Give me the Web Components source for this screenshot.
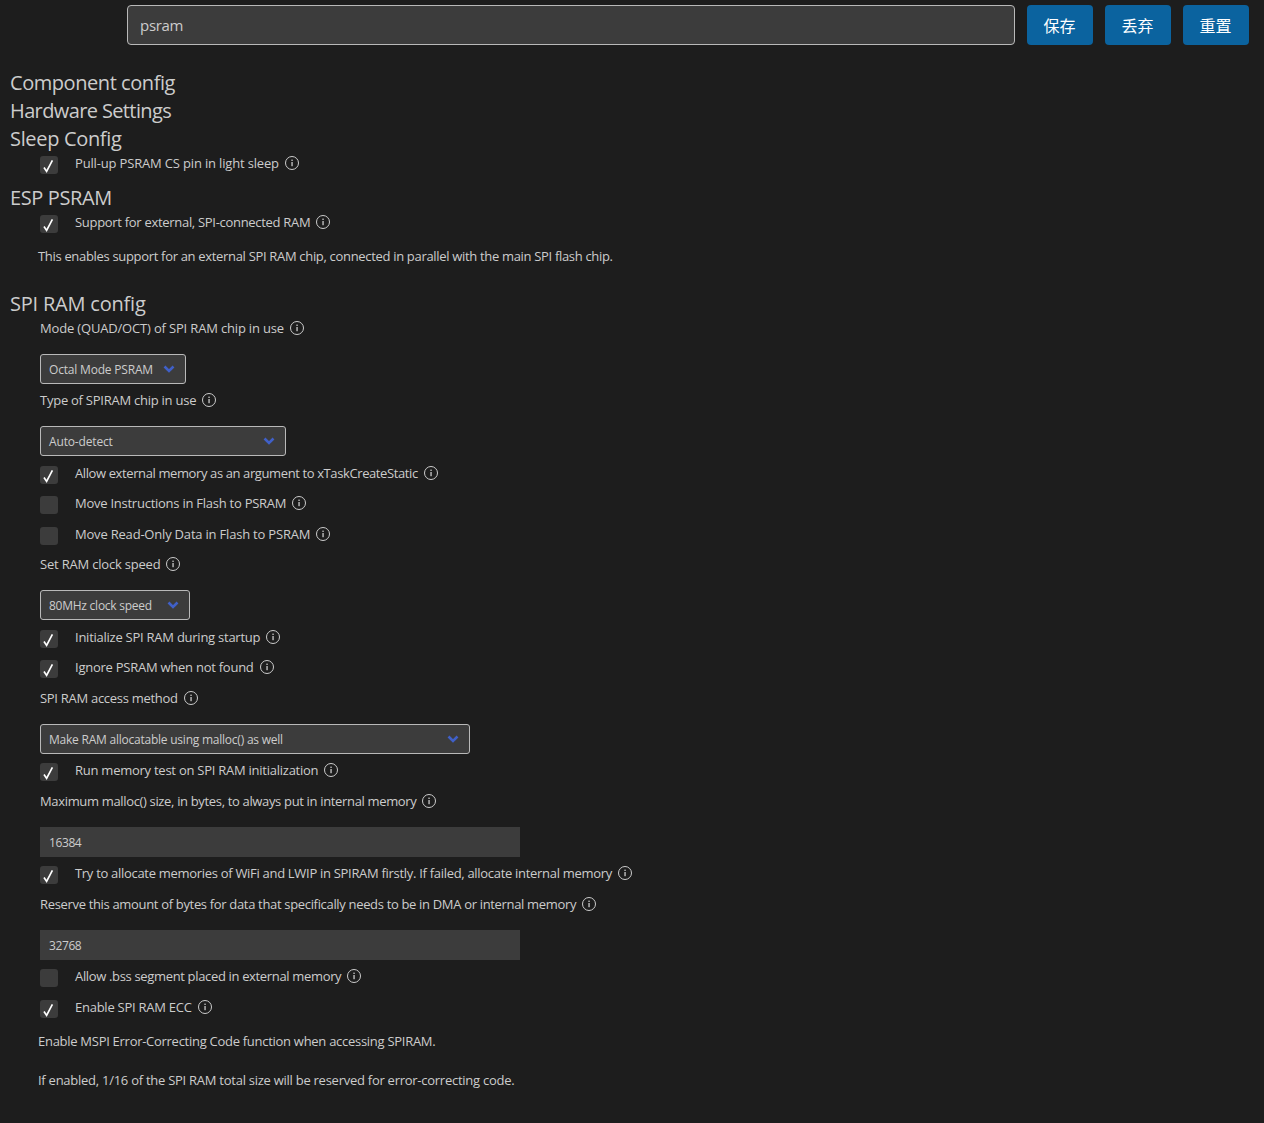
<!DOCTYPE html>
<html lang="en">
<head>
<meta charset="utf-8">
<title>SDK Configuration</title>
<style>
  html, body { margin: 0; padding: 0; background: #1d1d1d; }
  body { color: #cccccc; font-family: "Open Sans", "Noto Sans CJK SC", sans-serif; font-size: 13px; height: 1123px; overflow: hidden; }
  main { padding: 24px 0 0 10px; }
</style>
</head>
<body>
<top-bar value="psram">
  <action-button>保存</action-button>
  <action-button>丢弃</action-button>
  <action-button>重置</action-button>
</top-bar>
<main>
  <config-heading style="--ls:-.44px">Component config</config-heading>
  <config-heading style="--ls:-.62px">Hardware Settings</config-heading>
  <config-heading style="--ls:-.33px">Sleep Config</config-heading>
  <check-row checked style="--ls:-.165px">Pull-up PSRAM CS pin in light sleep</check-row>
  <config-heading style="--ls:-.39px">ESP PSRAM</config-heading>
  <check-row checked style="--ls:-.3px">Support for external, SPI-connected RAM</check-row>
  <config-note style="--ls:-.32px">This enables support for an external SPI RAM chip, connected in parallel with the main SPI flash chip.</config-note>
  <config-heading style="--ls:-.21px;margin-top:23.5px">SPI RAM config</config-heading>
  <field-label style="--ls:-.17px">Mode (QUAD/OCT) of SPI RAM chip in use</field-label>
  <select-box style="width:146px;--ls:-.19px">Octal Mode PSRAM</select-box>
  <field-label>Type of SPIRAM chip in use</field-label>
  <select-box style="width:246px;--ls:-.16px">Auto-detect</select-box>
  <check-row checked style="--ls:-.39px">Allow external memory as an argument to xTaskCreateStatic</check-row>
  <check-row>Move Instructions in Flash to PSRAM</check-row>
  <check-row style="--ls:-.2px">Move Read-Only Data in Flash to PSRAM</check-row>
  <field-label style="--ls:-.2px">Set RAM clock speed</field-label>
  <select-box style="width:150px">80MHz clock speed</select-box>
  <check-row checked>Initialize SPI RAM during startup</check-row>
  <check-row checked>Ignore PSRAM when not found</check-row>
  <field-label style="--ls:-.29px">SPI RAM access method</field-label>
  <select-box style="width:430px;--ls:-.23px">Make RAM allocatable using malloc() as well</select-box>
  <check-row checked>Run memory test on SPI RAM initialization</check-row>
  <field-label style="--ls:-.34px">Maximum malloc() size, in bytes, to always put in internal memory</field-label>
  <number-field>16384</number-field>
  <check-row checked style="--ls:-.3px">Try to allocate memories of WiFi and LWIP in SPIRAM firstly. If failed, allocate internal memory</check-row>
  <field-label style="--ls:-.33px">Reserve this amount of bytes for data that specifically needs to be in DMA or internal memory</field-label>
  <number-field>32768</number-field>
  <check-row style="--ls:-.34px">Allow .bss segment placed in external memory</check-row>
  <check-row checked>Enable SPI RAM ECC</check-row>
  <config-note style="--ls:-.28px">Enable MSPI Error-Correcting Code function when accessing SPIRAM.</config-note>
  <config-note style="--ls:-.26px;margin-top:19px">If enabled, 1/16 of the SPI RAM total size will be reserved for error-correcting code.</config-note>
</main>

<script>
const FONT = '"Open Sans", "Noto Sans CJK SC", sans-serif';

const INFO_ICON = `<svg class="info" width="16" height="16" viewBox="0 0 16 16" fill="none">
  <circle cx="8" cy="8" r="6.5" stroke="#cccccc" stroke-width="1"/>
  <rect x="7.4" y="7" width="1.3" height="4.2" fill="#cccccc"/>
  <rect x="7.4" y="4.6" width="1.3" height="1.4" fill="#cccccc"/>
</svg>`;

// small helper so each element only has to say its css and markup
function define(name, css, html, init) {
  customElements.define(name, class extends HTMLElement {
    constructor() {
      super();
      const root = this.attachShadow({ mode: 'open' });
      root.innerHTML = `<style>${css}</style>${html}`;
      if (init) init(this, root);
    }
  });
}

define('top-bar', `
  :host { display: flex; align-items: stretch; height: 40px; padding: 5px 15px 0 127px; gap: 12px; }
  .search { box-sizing: border-box; flex: 1; display: flex; align-items: center; padding: 0 12px;
    background: #3c3c3c; border: 1px solid #b9b9b9; border-radius: 4px;
    color: #cccccc; font: 15px ${FONT}; letter-spacing: -.3px; }
`, `<div class="search"></div><slot></slot>`, (el, root) => {
  root.querySelector('.search').textContent = el.getAttribute('value');
});

define('action-button', `
  :host { box-sizing: border-box; display: flex; align-items: center; justify-content: center; width: 66px; height: 40px;
    padding: 0 1px 1px 0; background: #0b639f; border-radius: 4px; color: #ffffff; font: 16px ${FONT}; }
`, `<slot></slot>`);

define('config-heading', `
  :host { display: block; height: 28px; font: 20px/28px ${FONT}; letter-spacing: var(--ls, -.5px); color: #cccccc; }
`, `<slot></slot>`);

define('check-row', `
  :host { display: flex; height: 30.5px; padding-left: 30px; color: #cccccc; font: 13px/20px ${FONT}; letter-spacing: var(--ls, -.25px); }
  .box { flex: none; width: 18px; height: 18px; margin-top: 3px; background: #3c3c3c; border-radius: 3px; }
  .box svg { display: none; }
  :host([checked]) .box svg { display: block; }
  .text { margin-left: 17px; }
  .info { margin: 2px 0 0 5px; flex: none; }
`, `<div class="box"><svg width="18" height="18" viewBox="0 0 18 18" fill="none"><path d="M4 11.6 L6.6 15.4 L12.4 4.4" stroke="#ffffff" stroke-width="1.7"/></svg></div><div class="text"><slot></slot></div>${INFO_ICON}`);

define('field-label', `
  :host { display: flex; height: 36px; padding-left: 30px; color: #cccccc; font: 13px/20px ${FONT}; letter-spacing: var(--ls, -.25px); }
  .info { margin: 2px 0 0 5px; flex: none; }
`, `<div><slot></slot></div>${INFO_ICON}`);

define('select-box', `
  :host { box-sizing: border-box; display: flex; align-items: center; justify-content: space-between; height: 30px;
    margin: 0 0 6.5px 30px; padding: 1px 10px 0 8px; background: #3c3c3c; border: 1px solid #b9b9b9; border-radius: 3px;
    color: #cccccc; font: 12px ${FONT}; letter-spacing: var(--ls, -.25px); }
  svg { margin-top: -1px; }
`, `<slot></slot><svg width="12" height="8" viewBox="0 0 12 8" fill="none"><path d="M1.5 1.5 L6 6 L10.5 1.5" stroke="#4060c8" stroke-width="2.6"/></svg>`);

define('number-field', `
  :host { box-sizing: border-box; display: flex; align-items: center; width: 480px; height: 30px;
    margin: 0 0 6.5px 30px; padding: 1px 9px 0; background: #3c3c3c; color: #cccccc; font: 12px ${FONT}; letter-spacing: -.4px; }
`, `<slot></slot>`);

define('config-note', `
  :host { display: block; margin: 4px 0 0 28px; color: #cccccc; font: 13px/20px ${FONT}; letter-spacing: var(--ls, -.25px); }
`, `<slot></slot>`);
</script>
</body>
</html>
